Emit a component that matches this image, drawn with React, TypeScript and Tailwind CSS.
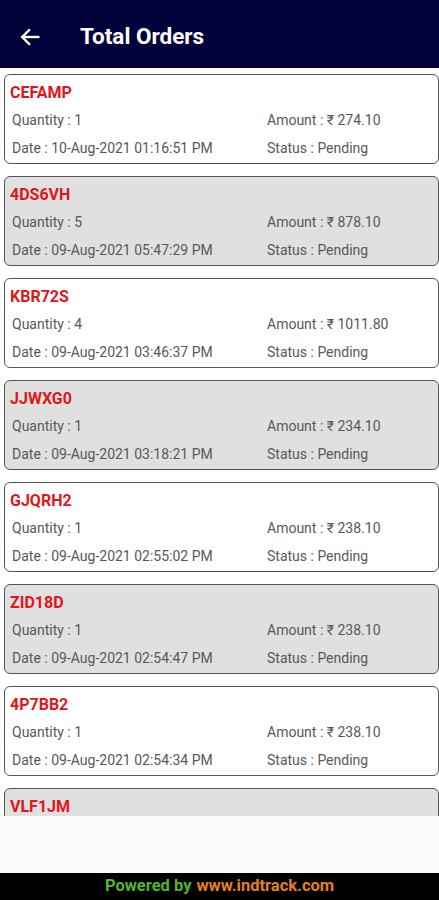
import React from 'react';

interface Order {
  code: string;
  quantity: number;
  amount: string;
  date: string;
  status: string;
}

const orders: Order[] = [
  { code: 'CEFAMP', quantity: 1, amount: '274.10', date: '10-Aug-2021 01:16:51 PM', status: 'Pending' },
  { code: '4DS6VH', quantity: 5, amount: '878.10', date: '09-Aug-2021 05:47:29 PM', status: 'Pending' },
  { code: 'KBR72S', quantity: 4, amount: '1011.80', date: '09-Aug-2021 03:46:37 PM', status: 'Pending' },
  { code: 'JJWXG0', quantity: 1, amount: '234.10', date: '09-Aug-2021 03:18:21 PM', status: 'Pending' },
  { code: 'GJQRH2', quantity: 1, amount: '238.10', date: '09-Aug-2021 02:55:02 PM', status: 'Pending' },
  { code: 'ZID18D', quantity: 1, amount: '238.10', date: '09-Aug-2021 02:54:47 PM', status: 'Pending' },
  { code: '4P7BB2', quantity: 1, amount: '238.10', date: '09-Aug-2021 02:54:34 PM', status: 'Pending' },
  { code: 'VLF1JM', quantity: 1, amount: '238.10', date: '09-Aug-2021 02:54:20 PM', status: 'Pending' },
];

const OrderCard: React.FC<{ order: Order; shaded: boolean }> = ({ order, shaded }) => (
  <div
    className={`shrink-0 h-[90px] ml-1 rounded-md border border-[#555] pt-[7px] pl-[7px] ${
      shaded ? 'bg-[#e0e0e0]' : 'bg-white'
    }`}
  >
    <div className="text-[16px] font-bold leading-[22px] text-[#e0161c] -ml-[2px]">{order.code}</div>
    <div className="mt-[2px] grid grid-cols-[255px_1fr] text-[14px] text-[#585858]">
      <div className="h-7 leading-7">Quantity : {order.quantity}</div>
      <div className="h-7 leading-7">Amount : ₹ {order.amount}</div>
      <div className="h-7 leading-7">Date : {order.date}</div>
      <div className="h-7 leading-7">Status : {order.status}</div>
    </div>
  </div>
);

const App: React.FC = () => {
  return (
    <div className="w-[439px] h-[900px] flex flex-col bg-[#fafafa]" style={{ fontFamily: 'Roboto, "Noto Sans", sans-serif' }}>
      <div className="h-[68px] shrink-0 bg-[#02023a] flex items-center pt-[6px]">
        <svg className="ml-[19px]" width="22" height="22" viewBox="0 0 24 24" fill="none" stroke="white" strokeWidth="2.6" strokeLinecap="square">
          <path d="M21 12H4" />
          <path d="M11 4.5L3.5 12L11 19.5" />
        </svg>
        <span className="ml-[39px] text-[22.5px] font-bold text-white">Total Orders</span>
      </div>

      <div className="h-[748px] shrink-0 overflow-hidden flex flex-col gap-3 pt-[6px] bg-white">
        {orders.map((o, i) => (
          <OrderCard key={o.code} order={o} shaded={i % 2 === 1} />
        ))}
      </div>

      <div className="flex-1 bg-[#fafafa]" />

      <div className="h-[27px] shrink-0 bg-black flex items-center justify-center text-[16.5px] font-bold">
        <span className="text-[#4fb82c]">Powered by</span>
        <span className="ml-[5px] text-[#e5801f]">www.indtrack.com</span>
      </div>
    </div>
  );
};

export default App;
